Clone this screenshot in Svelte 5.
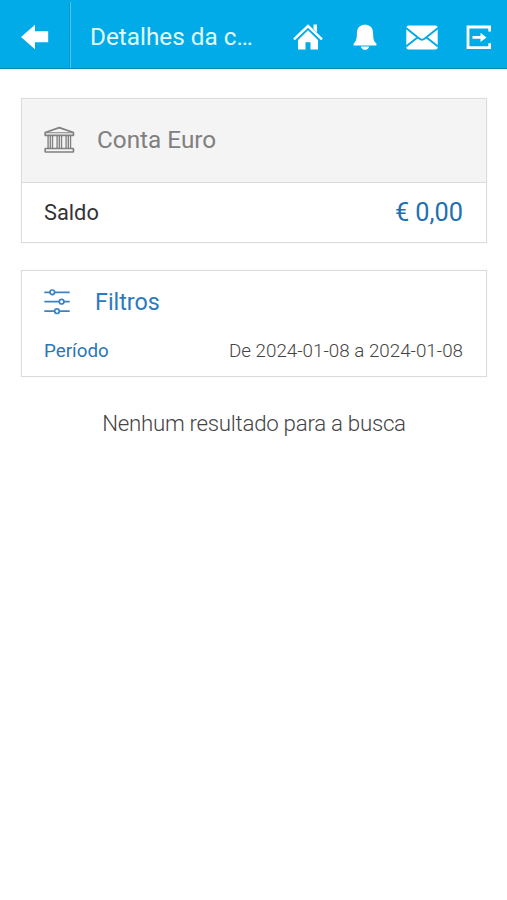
<script>
    let titulo = "Detalhes da c…";
    let conta = { nome: "Conta Euro", saldo: "€ 0,00" };
    let filtro = { inicio: "2024-01-08", fim: "2024-01-08" };
    let movimentos = [];
</script>

<header>
    <button class="voltar" aria-label="Voltar">
        <svg width="28" height="26" viewBox="0 0 28 26">
            <path d="M0 13 14 0.7V7.3H27.2V18.3H14V25.2Z" fill="#fff" />
        </svg>
    </button>
    <h1>{titulo}</h1>
    <nav>
        <button aria-label="Início">
            <svg width="30" height="26" viewBox="0 0 30 26">
                <path d="M15 6.2 25 16V25.6H17.5V18.2H12.5V25.6H5V16Z" fill="#fff" />
                <path d="M20.5 0.5H24V8.5L20.5 5Z" fill="#fff" />
                <path
                    d="M1 15.4 15 2 29 15.4"
                    fill="none"
                    stroke="#fff"
                    stroke-width="2.5"
                />
            </svg>
        </button>
        <button aria-label="Notificações">
            <svg width="24" height="26" viewBox="0 0 24 26">
                <path
                    d="M12 0.8C14 0.8 15 1.2 16 1.8C19.5 3.2 20 6.5 20.1 10C20.3 15.5 21 17.6 23.4 19.5V21.4H0.6V19.5C3 17.6 3.7 15.5 3.9 10C4 6.5 4.5 3.2 8 1.8C9 1.2 10 0.8 12 0.8Z"
                    fill="#fff"
                />
                <path d="M7.8 22.4H16.2C15.5 24.7 14 25.8 12 25.8S8.5 24.7 7.8 22.4Z" fill="#fff" />
            </svg>
        </button>
        <button aria-label="Mensagens">
            <svg width="32" height="25" viewBox="0 0 32 25">
                <rect x="0.3" y="0.5" width="31.4" height="24" rx="2.5" fill="#fff" />
                <path
                    d="M0 3 13.5 13.8Q16 15.6 18.5 13.8L32 3M0 21.5 11.5 12.4M32 21.5 20.5 12.4"
                    fill="none"
                    stroke="#00abe8"
                    stroke-width="1.9"
                />
            </svg>
        </button>
        <button aria-label="Sair">
            <svg width="25" height="25" viewBox="0 0 25 25">
                <path
                    d="M23.7 6.5V2H2V22.7H23.7V18.2"
                    fill="none"
                    stroke="#fff"
                    stroke-width="2.8"
                />
                <path d="M6.5 11H14.5V7.7L20.5 12.4 14.5 17.1V13.8H6.5Z" fill="#fff" />
            </svg>
        </button>
    </nav>
</header>

<main>
    <section class="conta">
        <div class="topo">
            <svg width="31" height="28" viewBox="0 0 32 28">
                <g fill="none" stroke="#808080" stroke-width="1.7" stroke-linejoin="round">
                    <path d="M1.2 6.3 15.8 1.2 30.4 6.3V9.2H1.2Z" />
                    <path d="M1.2 6.5H30.4" stroke-width="1" />
                    <rect x="1.2" y="22.8" width="29.2" height="3.6" rx="0.5" />
                    <path
                        d="M4.2 9.5V22.5M6.5 9.5V22.5M8.8 9.5V22.5M13.5 9.5V22.5M15.8 9.5V22.5M18.1 9.5V22.5M22.8 9.5V22.5M25.1 9.5V22.5M27.4 9.5V22.5"
                        stroke-width="1.4"
                    />
                </g>
            </svg>
            <h2>{conta.nome}</h2>
        </div>
        <div class="saldo">
            <span>Saldo</span>
            <span class="valor">{conta.saldo}</span>
        </div>
    </section>

    <section class="filtros">
        <div class="linha">
            <svg width="26" height="26" viewBox="0 0 26 26">
                <g fill="#fff" stroke="#3b83c3" stroke-width="1.7">
                    <path d="M0.3 3.3H25.7M0.3 12.7H25.7M0.3 22.2H25.7" />
                    <circle cx="8.3" cy="3.3" r="2.3" />
                    <circle cx="17.6" cy="12.7" r="2.3" />
                    <circle cx="13" cy="22.2" r="2.3" />
                </g>
            </svg>
            <h2>Filtros</h2>
        </div>
        <div class="periodo">
            <span class="rotulo">Período</span>
            <span class="datas">De {filtro.inicio} a {filtro.fim}</span>
        </div>
    </section>

    {#if movimentos.length === 0}
        <p>Nenhum resultado para a busca</p>
    {/if}
</main>

<style>
    :global(body) {
        background-color: #fff;
        font-family: Roboto, "Liberation Sans", sans-serif;
    }

    header {
        display: flex;
        align-items: center;
        height: 69px;
        box-sizing: border-box;
        border-bottom: 1px solid #0788b8;
        background-color: #00abe8;
    }

    h1,
    h2 {
        margin: 0;
        font-weight: 400;
    }

    button {
        display: flex;
        padding: 0;
        border: none;
        background: none;
    }

    svg {
        display: block;
        flex: none;
    }

    .voltar {
        box-sizing: border-box;
        width: 71px;
        height: 66px;
        margin-top: 2px;
        padding: 22px 0 0 21px;
        border-right: 1px solid #49c8f1;
        box-shadow: inset -1px 0 #0797ca;
    }

    h1 {
        width: 165px;
        margin: 6px 0 0 19px;
        white-space: nowrap;
        color: #e2f9ff;
        font-size: 24.3px;
        line-height: 32px;
    }

    nav {
        display: flex;
        align-items: center;
        gap: 29px;
        margin: 6px 0 0 38px;
    }

    nav button:first-child {
        margin-right: 1px;
    }

    nav button:last-child {
        margin-left: -1px;
    }

    main {
        padding: 29px 20px 0 21px;
    }

    section {
        border: 1px solid #dcdcdc;
        box-shadow: 0 0 1px #e4e4e4;
    }

    .topo {
        display: flex;
        align-items: center;
        gap: 22px;
        height: 81px;
        padding: 0 0 2px 22px;
        border-bottom: 1px solid #dadada;
        background-color: #f4f4f4;
    }

    .topo h2 {
        color: #808080;
        font-size: 24.3px;
    }

    .saldo {
        display: flex;
        align-items: center;
        justify-content: space-between;
        height: 59px;
        padding: 0 23px 0 22px;
        color: #333;
        font-size: 21.8px;
    }

    .valor {
        color: #2270b0;
        font-size: 25.3px;
    }

    .filtros {
        height: 105px;
        margin-top: 27px;
    }

    .linha {
        display: flex;
        align-items: center;
        gap: 25px;
        padding: 15px 0 0 22px;
        height: 32px;
    }

    .linha h2 {
        color: #2b7ac1;
        font-size: 23.3px;
    }

    .periodo {
        display: flex;
        align-items: center;
        justify-content: space-between;
        margin-top: 19px;
        padding: 0 23px 0 22px;
        font-size: 18.8px;
        line-height: 28px;
    }

    .rotulo {
        color: #2b76b5;
    }

    .datas {
        color: #444;
        font-weight: 300;
    }

    p {
        margin: 32px 0 0;
        color: #444;
        font-size: 22.3px;
        font-weight: 300;
        letter-spacing: -0.28px;
        line-height: 28px;
        text-align: center;
    }
</style>
